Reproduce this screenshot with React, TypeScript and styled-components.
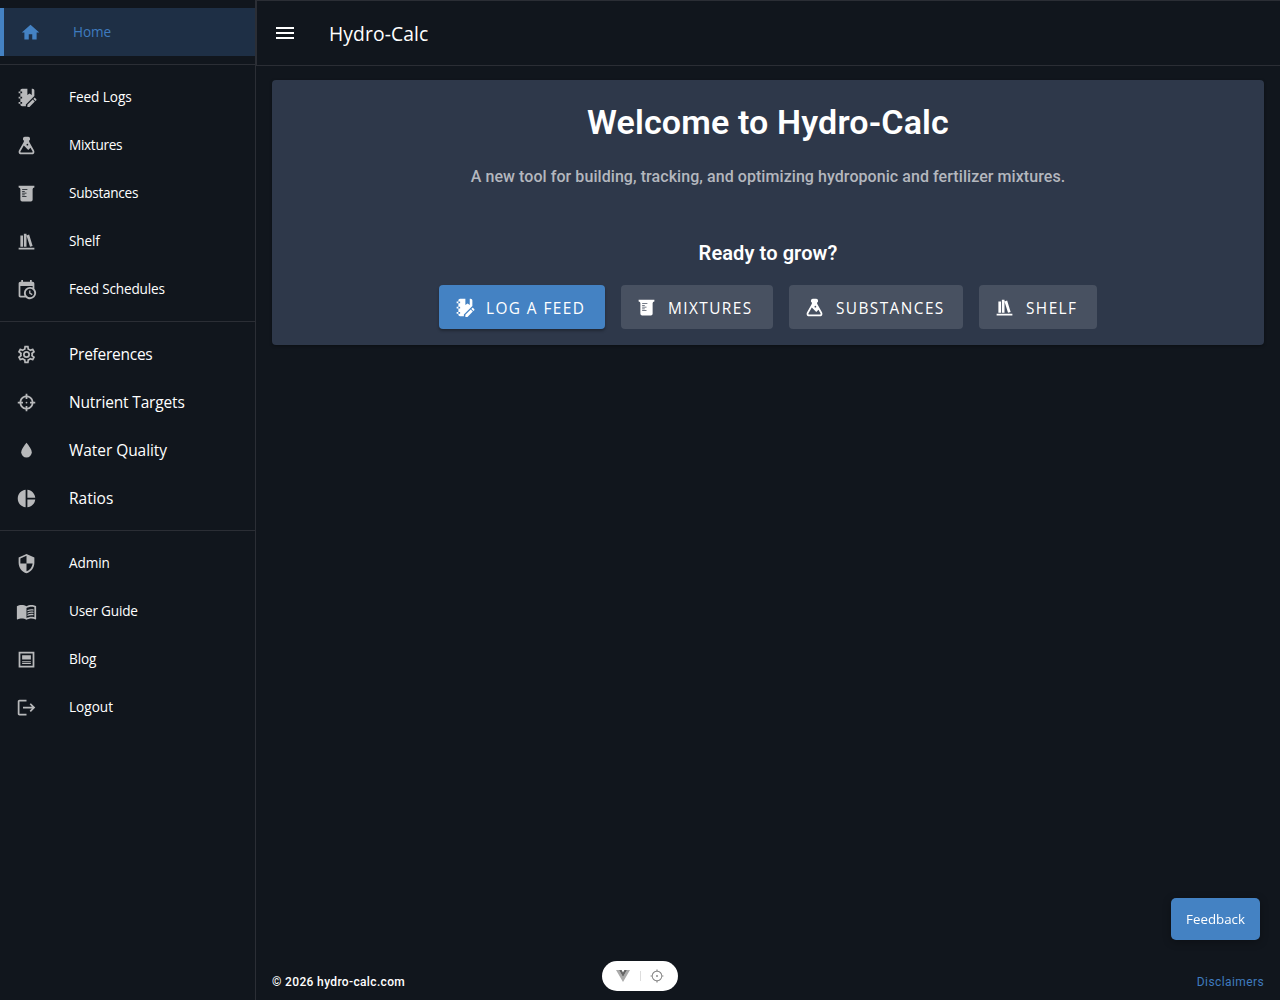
import React from "react";
import styled, { createGlobalStyle, css } from "styled-components";

const ui = `"Segoe UI", "Open Sans", "Noto Sans", sans-serif`;
const roboto = `Roboto, sans-serif`;

const GlobalStyle = createGlobalStyle`
  *, *::before, *::after { box-sizing: border-box; }
  body { margin: 0; background: #11161d; color: #fff; font-family: ${ui}; }
  button { font: inherit; color: inherit; border: 0; cursor: pointer; }
`;

const paths = {
  home: "M10,20V14H14V20H19V12H22L12,3L2,12H5V20H10Z",
  notebookEdit:
    "M3,7V5H5V4C5,2.89 5.9,2 7,2H13V9L15.5,7.5L18,9V2H19C20.05,2 21,2.95 21,4V10.3L11.3,20V22H7C5.95,22 5,21.05 5,20V19H3V17H5V13H3V11H5V7H3M5,7H7V5H5V7M5,11V13H7V11H5M5,17V19H7V17H5M13,20.4V22.8H15.4L21.5,16.7L19.1,14.3L13,20.4M23.2,13.9L21.9,12.6C21.6,12.3 21.1,12.3 20.8,12.6L19.8,13.6L22.2,16L23.2,15C23.5,14.7 23.5,14.2 23.2,13.9Z",
  flask:
    "M6,22A3,3 0 0,1 3,19C3,18.4 3.18,17.84 3.5,17.37L9,7.81V6A1,1 0 0,1 8,5V4A2,2 0 0,1 10,2H14A2,2 0 0,1 16,4V5A1,1 0 0,1 15,6V7.81L20.5,17.37C20.82,17.84 21,18.4 21,19A3,3 0 0,1 18,22H6M5,19A1,1 0 0,0 6,20H18A1,1 0 0,0 19,19C19,18.79 18.93,18.59 18.82,18.43L16.53,14.47L14,17L8.93,11.93L5.18,18.43C5.07,18.59 5,18.79 5,19M13,10A1,1 0 0,0 12,11A1,1 0 0,0 13,12A1,1 0 0,0 14,11A1,1 0 0,0 13,10Z",
  beaker:
    "M3,3H21V5A2,2 0 0,0 19,7V19A2,2 0 0,1 17,21H7A2,2 0 0,1 5,19V7A2,2 0 0,0 3,5V3M7,7V8H13V7H7M7,9V10H10V9H7M7,11V12H12V11H7M7,13V14H10V13H7M7,15V16H12V15H7Z",
  shelf: "M9 3V18H12V3H9M12 5L16 18L19 17L15 4L12 5M5 5V18H8V5H5M3 19V21H21V19H3Z",
  calendar:
    "M15,13H16.5V15.82L18.94,17.23L18.19,18.53L15,16.69V13M19,8H5V19H9.67C9.24,18.09 9,17.07 9,16A7,7 0 0,1 16,9C17.07,9 18.09,9.24 19,9.67V8M5,21C3.89,21 3,20.1 3,19V5C3,3.89 3.89,3 5,3H6V1H8V3H16V1H18V3H19A2,2 0 0,1 21,5V11.1C22.24,12.36 23,14.09 23,16A7,7 0 0,1 16,23C14.09,23 12.36,22.24 11.1,21H5M16,11.15A4.85,4.85 0 0,0 11.15,16C11.15,18.68 13.32,20.85 16,20.85A4.85,4.85 0 0,0 20.85,16C20.85,13.32 18.68,11.15 16,11.15Z",
  cog:
    "M12,8A4,4 0 0,1 16,12A4,4 0 0,1 12,16A4,4 0 0,1 8,12A4,4 0 0,1 12,8M12,10A2,2 0 0,0 10,12A2,2 0 0,0 12,14A2,2 0 0,0 14,12A2,2 0 0,0 12,10M10,22C9.75,22 9.54,21.82 9.5,21.58L9.13,18.93C8.5,18.68 7.96,18.34 7.44,17.94L4.95,18.95C4.73,19.03 4.46,18.95 4.34,18.73L2.34,15.27C2.21,15.05 2.27,14.78 2.46,14.63L4.57,12.97L4.5,12L4.57,11L2.46,9.37C2.27,9.22 2.21,8.95 2.34,8.73L4.34,5.27C4.46,5.05 4.73,4.96 4.95,5.05L7.44,6.05C7.96,5.66 8.5,5.32 9.13,5.07L9.5,2.42C9.54,2.18 9.75,2 10,2H14C14.25,2 14.46,2.18 14.5,2.42L14.87,5.07C15.5,5.32 16.04,5.66 16.56,6.05L19.05,5.05C19.27,4.96 19.54,5.05 19.66,5.27L21.66,8.73C21.79,8.95 21.73,9.22 21.54,9.37L19.43,11L19.5,12L19.43,13L21.54,14.63C21.73,14.78 21.79,15.05 21.66,15.27L19.66,18.73C19.54,18.95 19.27,19.04 19.05,18.95L16.56,17.95C16.04,18.34 15.5,18.68 14.87,18.93L14.5,21.58C14.46,21.82 14.25,22 14,22H10M11.25,4L10.88,6.61C9.68,6.86 8.62,7.5 7.85,8.39L5.44,7.35L4.69,8.65L6.8,10.2C6.4,11.37 6.4,12.64 6.8,13.8L4.68,15.36L5.43,16.66L7.86,15.62C8.63,16.5 9.68,17.14 10.87,17.38L11.24,20H12.76L13.13,17.39C14.32,17.14 15.37,16.5 16.14,15.62L18.57,16.66L19.32,15.36L17.2,13.81C17.6,12.64 17.6,11.37 17.2,10.2L19.31,8.65L18.56,7.35L16.15,8.39C15.38,7.5 14.32,6.86 13.12,6.62L12.75,4H11.25Z",
  target:
    "M11,2V4.07C7.38,4.53 4.53,7.38 4.07,11H2V13H4.07C4.53,16.62 7.38,19.47 11,19.93V22H13V19.93C16.62,19.47 19.47,16.62 19.93,13H22V11H19.93C19.47,7.38 16.62,4.53 13,4.07V2M11,6.08V8H13V6.09C15.5,6.5 17.5,8.5 17.92,11H16V13H17.91C17.5,15.5 15.5,17.5 13,17.92V16H11V17.91C8.5,17.5 6.5,15.5 6.08,13H8V11H6.09C6.5,8.5 8.5,6.5 11,6.08M12,11A1,1 0 0,0 11,12A1,1 0 0,0 12,13A1,1 0 0,0 13,12A1,1 0 0,0 12,11Z",
  water: "M12,20A6,6 0 0,1 6,14C6,10 12,3.25 12,3.25C12,3.25 18,10 18,14A6,6 0 0,1 12,20Z",
  pie: "M11,2V22C5.9,21.5 2,17.2 2,12C2,6.8 5.9,2.5 11,2M13,2V11H22C21.5,6.2 17.8,2.5 13,2M13,13V22C17.7,21.5 21.5,17.8 22,13H13Z",
  shield:
    "M12,12H19C18.47,16.11 15.72,19.78 12,20.92V12H5V6.3L12,3.19M12,1L3,5V11C3,16.55 6.84,21.73 12,23C17.16,21.73 21,16.55 21,11V5L12,1Z",
  book:
    "M21,5C19.89,4.65 18.67,4.5 17.5,4.5C15.55,4.5 13.45,4.9 12,6C10.55,4.9 8.45,4.5 6.5,4.5C4.55,4.5 2.45,4.9 1,6V20.65C1,20.9 1.25,21.15 1.5,21.15C1.6,21.15 1.65,21.1 1.75,21.1C3.1,20.45 5.05,20 6.5,20C8.45,20 10.55,20.4 12,21.5C13.35,20.65 15.8,20 17.5,20C19.15,20 20.85,20.3 22.25,21.05C22.35,21.1 22.4,21.1 22.5,21.1C22.75,21.1 23,20.85 23,20.6V6C22.4,5.55 21.75,5.25 21,5M21,18.5C19.9,18.15 18.7,18 17.5,18C15.8,18 13.35,18.65 12,19.5V8C13.35,7.15 15.8,6.5 17.5,6.5C18.7,6.5 19.9,6.65 21,7V18.5M13,10.3V11.8C14.3,11.1 15.9,10.8 17.5,10.8C18.4,10.8 19.2,10.9 20,11V9.5C17.5,9.1 15,9.3 13,10.3M13,13V14.5C14.3,13.8 15.9,13.5 17.5,13.5C18.4,13.5 19.2,13.6 20,13.7V12.2C17.5,11.8 15,12 13,13M13,15.7V17.2C14.3,16.5 15.9,16.2 17.5,16.2C18.4,16.2 19.2,16.3 20,16.4V14.9C17.5,14.5 15,14.7 13,15.7Z",
  post: "M19 5V19H5V5H19M21 3H3V21H21V3M17 17H7V16H17V17M17 15H7V14H17V15M17 12H7V7H17V12Z",
  logout:
    "M17 7L15.59 8.41L18.17 11H8V13H18.17L15.59 15.58L17 17L22 12M4 5H12V3H4C2.9 3 2 3.9 2 5V19C2 20.1 2.9 21 4 21H12V19H4V5Z",
  menu: "M3,6H21V8H3V6M3,11H21V13H3V11M3,16H21V18H3V16Z",
};
type IconName = keyof typeof paths;

const Svg = styled.svg<{ $size: number }>`
  display: block;
  flex: none;
  width: ${(p) => p.$size}px;
  height: ${(p) => p.$size}px;
  fill: currentColor;
  fill-rule: evenodd;
`;
const Icon = ({ name, size = 21 }: { name: IconName; size?: number }) => (
  <Svg $size={size} viewBox="0 0 24 24" aria-hidden="true">
    <path d={paths[name]} />
  </Svg>
);

const Shell = styled.div`
  display: grid;
  grid-template-columns: 256px 1fr;
  height: 1000px;
  overflow: hidden;
`;
const Sidebar = styled.nav`
  border-right: 1px solid #2b2e35;
  padding-top: 8px;
`;
const Group = styled.div`
  & + & {
    margin-top: 8px;
    padding-top: 8px;
    border-top: 1px solid #2b2e35;
  }
`;
const NavItem = styled.a<{ $active?: boolean; $large?: boolean; $track: number }>`
  display: flex;
  align-items: center;
  gap: 32px;
  height: 48px;
  padding: 0 16px;
  font-size: ${(p) => (p.$large ? 15.5 : 13.6)}px;
  letter-spacing: ${(p) => p.$track}px;
  white-space: nowrap;
  svg { color: #b8b9bb; }
  span { padding-bottom: ${(p) => (p.$large ? 0 : 2)}px; }
  ${(p) =>
    p.$active &&
    css`
      background: #1e2f45;
      border-left: 4px solid #4482c3;
      color: #3f7bbf;
      svg { color: #4482c3; }
    `}
`;
const Main = styled.div`
  display: flex;
  flex-direction: column;
  min-width: 0;
`;
const TopBar = styled.header`
  display: flex;
  align-items: center;
  gap: 32px;
  height: 66px;
  padding: 0 16px;
  border: 1px solid #2b2e35;
  border-right: 0;
`;
const AppName = styled.div`
  font-size: 19.3px;
  line-height: 28px;
  letter-spacing: 0.1px;
  padding-top: 2px;
`;
const Content = styled.main`
  flex: 1;
  padding: 14px 16px;
`;
const Card = styled.section`
  display: flex;
  flex-direction: column;
  align-items: center;
  height: 265px;
  padding-top: 16px;
  border-radius: 4px;
  background: #2e384a;
  box-shadow: 0 1px 3px rgba(0, 0, 0, 0.35);
  font-family: ${roboto};
`;
const Title = styled.h1`
  margin: 0;
  font-size: 34px;
  line-height: 52px;
  font-weight: 600;
  letter-spacing: 0.15px;
`;
const Lead = styled.p`
  margin: 17px 0 0;
  font-size: 16px;
  line-height: 24px;
  font-weight: 500;
  letter-spacing: 0.065px;
  color: #b4b7be;
`;
const Subtitle = styled.h2`
  margin: 48px 0 0;
  font-size: 20px;
  line-height: 32px;
  font-weight: 600;
  letter-spacing: 0.1px;
`;
const Actions = styled.div`
  display: flex;
  gap: 16px;
  margin-top: 16px;
`;
const ActionButton = styled.button<{ $primary?: boolean; $width: number }>`
  display: flex;
  align-items: center;
  gap: 11px;
  width: ${(p) => p.$width}px;
  height: 44px;
  padding: 0 0 0 15px;
  border-radius: 4px;
  background: ${(p) => (p.$primary ? "#4482c3" : "#485161")};
  box-shadow: ${(p) => (p.$primary ? "0 2px 3px rgba(0,0,0,.3)" : "none")};
  font-family: ${ui};
  font-size: 15.4px;
  letter-spacing: 1.42px;
  white-space: nowrap;
  span { padding-top: 3px; }
`;
const Footer = styled.footer`
  display: flex;
  align-items: center;
  justify-content: space-between;
  height: 36px;
  padding: 0 16px;
  font: 500 12px/20px ${roboto};
  letter-spacing: 0.35px;
`;
const FooterLink = styled.a`
  color: #3f7bbf;
  font-weight: 400;
  letter-spacing: 0.4px;
`;
const Feedback = styled.button`
  position: fixed;
  right: 20px;
  bottom: 60px;
  width: 89px;
  height: 42px;
  padding: 0;
  border-radius: 5px;
  background: #4482c3;
  box-shadow: 0 2px 8px rgba(0, 0, 0, 0.3);
  font-family: ${ui};
  font-size: 13.3px;
  font-weight: 500;
`;
const DevPill = styled.div`
  position: fixed;
  left: 602px;
  bottom: 9px;
  display: flex;
  align-items: center;
  justify-content: space-between;
  width: 76px;
  height: 30px;
  padding: 0 14px 0 13px;
  border-radius: 15px;
  background: #fff;
  color: #858585;
`;
const PillDivider = styled.i`
  width: 1px;
  height: 10px;
  background: #ddd;
`;
const VueMark = styled.svg`
  width: 16px;
  height: 14px;
`;

interface Item { icon: IconName; label: string; active?: boolean; large?: boolean; track?: number }
const groups: Item[][] = [
  [{ icon: "home", label: "Home", active: true, track: -0.1 }],
  [
    { icon: "notebookEdit", label: "Feed Logs", track: -0.06 },
    { icon: "flask", label: "Mixtures", track: -0.3 },
    { icon: "beaker", label: "Substances", track: -0.28 },
    { icon: "shelf", label: "Shelf", track: -0.15 },
    { icon: "calendar", label: "Feed Schedules", track: -0.18 },
  ],
  [
    { icon: "cog", label: "Preferences", large: true, track: -0.26 },
    { icon: "target", label: "Nutrient Targets", large: true, track: -0.16 },
    { icon: "water", label: "Water Quality", large: true, track: -0.06 },
    { icon: "pie", label: "Ratios", large: true },
  ],
  [
    { icon: "shield", label: "Admin", track: -0.08 },
    { icon: "book", label: "User Guide", track: -0.2 },
    { icon: "post", label: "Blog", track: -0.12 },
    { icon: "logout", label: "Logout" },
  ],
];
const actions: { icon: IconName; label: string; width: number; primary?: boolean }[] = [
  { icon: "notebookEdit", label: "LOG A FEED", width: 166, primary: true },
  { icon: "beaker", label: "MIXTURES", width: 152 },
  { icon: "flask", label: "SUBSTANCES", width: 174 },
  { icon: "shelf", label: "SHELF", width: 118 },
];

export default function App() {
  return (
    <>
      <GlobalStyle />
      <Shell>
        <Sidebar>
          {groups.map((items, i) => (
            <Group key={i}>
              {items.map((it) => (
                <NavItem key={it.label} $active={it.active} $large={it.large} $track={it.track ?? 0}>
                  <Icon name={it.icon} />
                  <span>{it.label}</span>
                </NavItem>
              ))}
            </Group>
          ))}
        </Sidebar>
        <Main>
          <TopBar>
            <Icon name="menu" size={24} />
            <AppName>Hydro-Calc</AppName>
          </TopBar>
          <Content>
            <Card>
              <Title>Welcome to Hydro-Calc</Title>
              <Lead>A new tool for building, tracking, and optimizing hydroponic and fertilizer mixtures.</Lead>
              <Subtitle>Ready to grow?</Subtitle>
              <Actions>
                {actions.map((a) => (
                  <ActionButton key={a.label} $width={a.width} $primary={a.primary}>
                    <Icon name={a.icon} />
                    <span>{a.label}</span>
                  </ActionButton>
                ))}
              </Actions>
            </Card>
          </Content>
          <Footer>
            <span>© 2026 hydro-calc.com</span>
            <FooterLink>Disclaimers</FooterLink>
          </Footer>
        </Main>
      </Shell>
      <Feedback>Feedback</Feedback>
      <DevPill>
        <VueMark viewBox="0 0 16 14">
          <path d="M1 1H4L8 8L12 1H15L8 13Z" fill="#aaa" />
          <path d="M4 1H6.6L8 3.5L9.4 1H12L8 8Z" fill="#666" />
        </VueMark>
        <PillDivider />
        <Svg $size={14} viewBox="0 0 24 24">
          <path d="M11 1H13V3.06A9 9 0 0 1 20.94 11H23V13H20.94A9 9 0 0 1 13 20.94V23H11V20.94A9 9 0 0 1 3.06 13H1V11H3.06A9 9 0 0 1 11 3.06ZM12 4.6A7.4 7.4 0 1 0 12 19.4A7.4 7.4 0 1 0 12 4.6ZM12 10.4A1.6 1.6 0 1 1 12 13.6A1.6 1.6 0 1 1 12 10.4Z" />
        </Svg>
      </DevPill>
    </>
  );
}
